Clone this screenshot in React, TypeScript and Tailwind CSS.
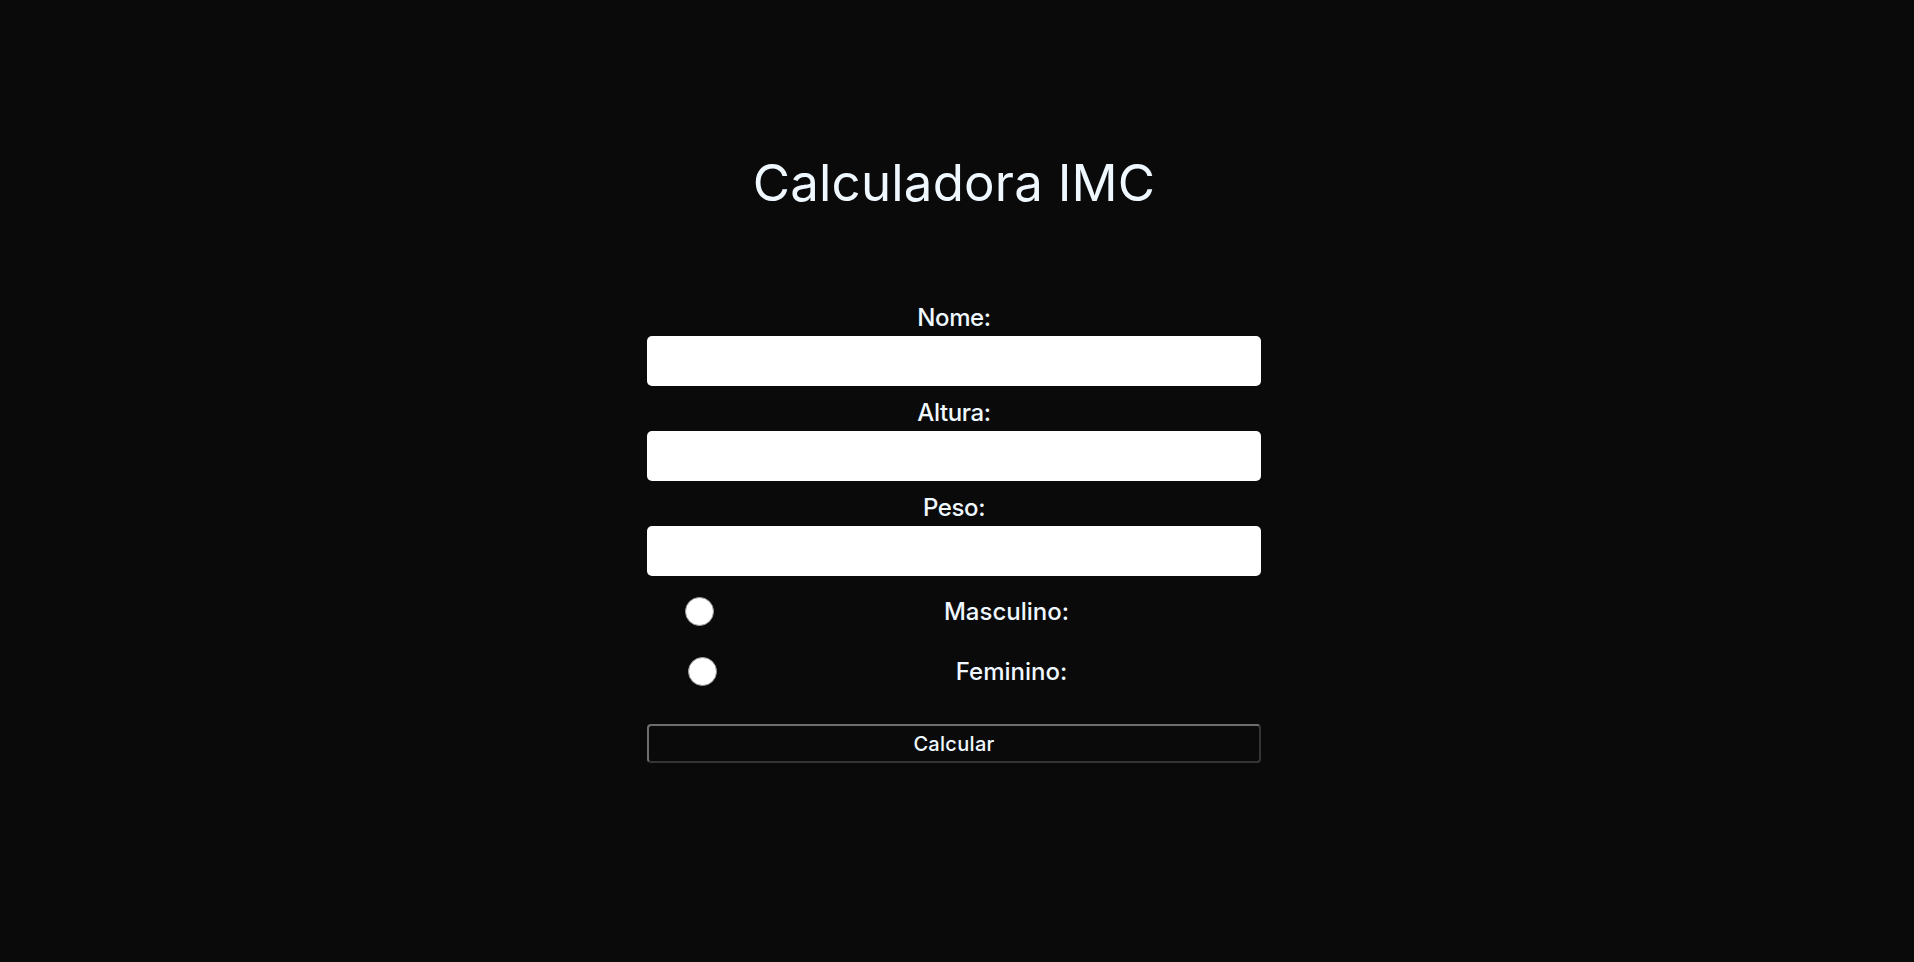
import { useState } from "react";

export default function App() {
  const [sexo, setSexo] = useState("");

  return (
    <div className="min-h-screen w-full bg-[#0a0a0a] text-[#f0f8ff] font-['Inter',sans-serif] pt-[153px] pr-[6px]">
      <h1 className="text-center text-[51px] leading-[60px] font-normal tracking-[0.2px]">Calculadora IMC</h1>

      <form className="w-[614px] mx-auto mt-[91px] flex flex-col" onSubmit={(e) => e.preventDefault()}>
        <label className="h-[28px] leading-[28px] text-center text-[24px] font-medium tracking-[-0.4px]">Nome:</label>
        <input type="text" className="mt-[4px] h-[50px] rounded-[5px] bg-white text-black px-3 outline-none" />

        <label className="mt-[13px] h-[28px] leading-[28px] text-center text-[24px] font-medium tracking-[-0.4px]">Altura:</label>
        <input type="text" className="mt-[4px] h-[50px] rounded-[5px] bg-white text-black px-3 outline-none" />

        <label className="mt-[13px] h-[28px] leading-[28px] text-center text-[24px] font-medium tracking-[-0.4px]">Peso:</label>
        <input type="text" className="mt-[4px] h-[50px] rounded-[5px] bg-white text-black px-3 outline-none" />

        <div className="mt-[21px] h-[29px] flex items-center">
          <button
            type="button"
            onClick={() => setSexo("m")}
            className="ml-[38px] w-[29px] h-[29px] rounded-full bg-white border border-[#9a9a9a] shrink-0"
          />
          <span className="flex-1 ml-[38px] text-center text-[24px] font-medium tracking-[0px]">Masculino:</span>
        </div>

        <div className="mt-[31px] h-[29px] flex items-center">
          <button
            type="button"
            onClick={() => setSexo("f")}
            className="ml-[41px] w-[29px] h-[29px] rounded-full bg-white border border-[#9a9a9a] shrink-0"
          />
          <span className="flex-1 ml-[45px] text-center text-[24px] font-medium tracking-[0px]">Feminino:</span>
        </div>

        <button
          type="submit"
          data-sexo={sexo}
          className="mt-[38px] h-[39px] rounded-[4px] border-2 border-t-[#6e6e6e] border-l-[#6e6e6e] border-b-[#343434] border-r-[#343434] bg-transparent text-[20px] text-[#f0f8ff] font-medium tracking-[0.3px]"
        >
          Calcular
        </button>
      </form>
    </div>
  );
}
